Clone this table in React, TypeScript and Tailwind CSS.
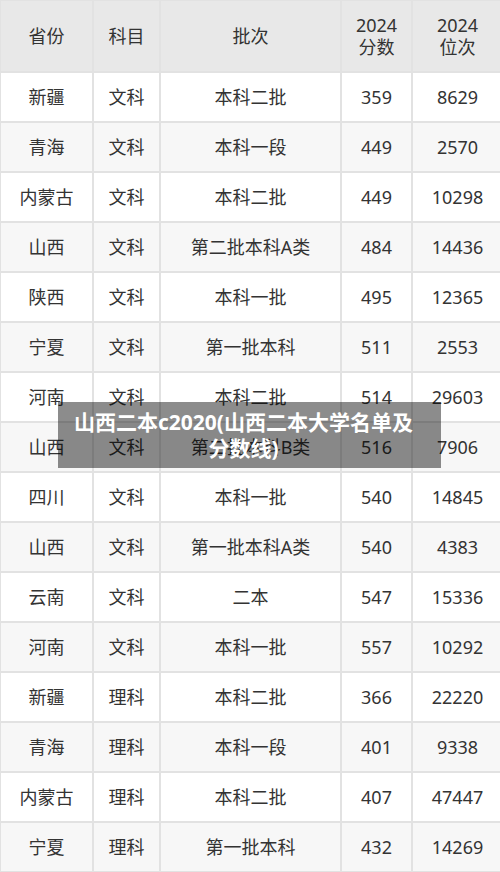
import React from "react";

const rows: [string, string, string, string, string][] = [
  ["新疆", "文科", "本科二批", "359", "8629"],
  ["青海", "文科", "本科一段", "449", "2570"],
  ["内蒙古", "文科", "本科二批", "449", "10298"],
  ["山西", "文科", "第二批本科A类", "484", "14436"],
  ["陕西", "文科", "本科一批", "495", "12365"],
  ["宁夏", "文科", "第一批本科", "511", "2553"],
  ["河南", "文科", "本科二批", "514", "29603"],
  ["山西", "文科", "第二批本科B类", "516", "7906"],
  ["四川", "文科", "本科一批", "540", "14845"],
  ["山西", "文科", "第一批本科A类", "540", "4383"],
  ["云南", "文科", "二本", "547", "15336"],
  ["河南", "文科", "本科一批", "557", "10292"],
  ["新疆", "理科", "本科二批", "366", "22220"],
  ["青海", "理科", "本科一段", "401", "9338"],
  ["内蒙古", "理科", "本科二批", "407", "47447"],
  ["宁夏", "理科", "第一批本科", "432", "14269"],
];

const cell = "border-2 border-[#e2e2e2] text-center align-middle";

export default function App() {
  return (
    <div className="relative w-[500px] h-[872px] overflow-hidden bg-white font-['Noto_Sans','Noto_Sans_CJK_SC',sans-serif] text-[#333] text-[18px]">
      <table className="w-[503px] -ml-px -mt-px table-fixed border-collapse">
        <colgroup>
          <col className="w-[93px]" />
          <col className="w-[67px]" />
          <col className="w-[181px]" />
          <col className="w-[71px]" />
          <col className="w-[91px]" />
        </colgroup>
        <thead>
          <tr className="h-[72px] bg-[#e8e8e8] leading-[22px]">
            <th className={cell + " font-normal"}>省份</th>
            <th className={cell + " font-normal"}>科目</th>
            <th className={cell + " font-normal"}>批次</th>
            <th className={cell + " font-normal"}>2024<br />分数</th>
            <th className={cell + " font-normal"}>2024<br />位次</th>
          </tr>
        </thead>
        <tbody>
          {rows.map((r, i) => (
            <tr key={i} className={"h-[50px] " + (i % 2 === 0 ? "bg-white" : "bg-[#f7f7f7]")}>
              {r.map((v, j) => (
                <td key={j} className={cell}>{v}</td>
              ))}
            </tr>
          ))}
        </tbody>
      </table>

      {/* title overlay */}
      <div className="absolute left-[58px] top-[402px] w-[383px] h-[66px] bg-black/45 flex items-center justify-center pl-[10px] pr-[22px]">
        <p className="text-white font-bold text-[21px] leading-[26px] text-center">
          山西二本c2020(山西二本大学名单及分数线)
        </p>
      </div>
    </div>
  );
}
